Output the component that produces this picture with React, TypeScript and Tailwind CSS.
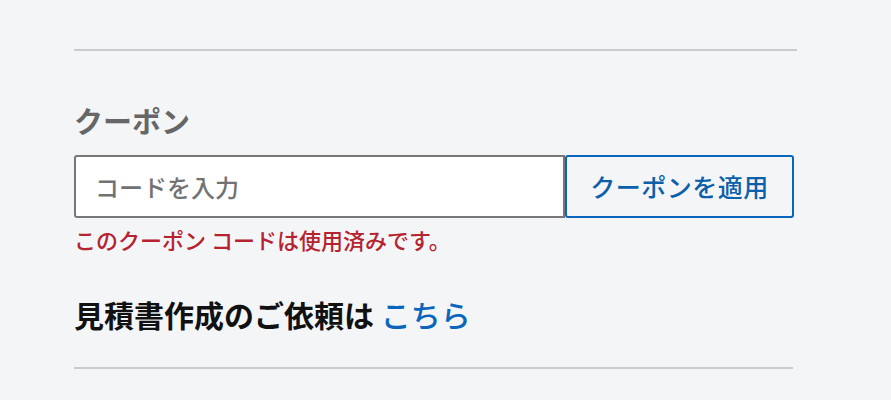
import React from 'react'

const FONT = '"Noto Sans CJK JP", "Noto Sans", sans-serif'

export default function App() {
  return (
    <div
      className="h-[400px] w-full bg-[#f4f5f7] pl-[74px] pt-[49px]"
      style={{ fontFamily: FONT }}
    >
      <div className="h-[2px] w-[723px] bg-[#cbcbcd]" />

      {/* Coupon label */}
      <div className="mt-[51px] text-[29px] font-semibold leading-[36px] text-[#666666]">
        クーポン
      </div>

      {/* Input + apply button */}
      <div className="mt-[17px] flex h-[63px] w-[720px]">
        <input
          type="text"
          placeholder="コードを入力"
          className="h-full w-[491px] rounded-l-[3px] border-2 border-[#777777] bg-white pl-[19px] text-[24px] font-medium text-[#333] outline-none placeholder:text-[#727272]"
          style={{ fontFamily: FONT }}
        />
        <button
          type="button"
          className="h-full w-[229px] rounded-[3px] border-2 border-[#0a66bd] bg-[#f4f5f7] text-[25px] font-medium tracking-[0.5px] text-[#0b5fab]"
          style={{ fontFamily: FONT }}
        >
          クーポンを適用
        </button>
      </div>

      {/* Error message */}
      <div className="mt-[7px] text-[22px] font-medium leading-[28px] text-[#b4232f]">
        このクーポン コードは使用済みです。
      </div>

      {/* Quote request */}
      <div className="mt-[41px] text-[30px] font-bold leading-[40px] text-[#111111]">
        見積書作成のご依頼は{' '}
        <a href="#" className="font-medium text-[#0a66bd]">
          こちら
        </a>
      </div>

      <div className="mt-[33px] h-[2px] w-[719px] bg-[#cbcbcd]" />
    </div>
  )
}
